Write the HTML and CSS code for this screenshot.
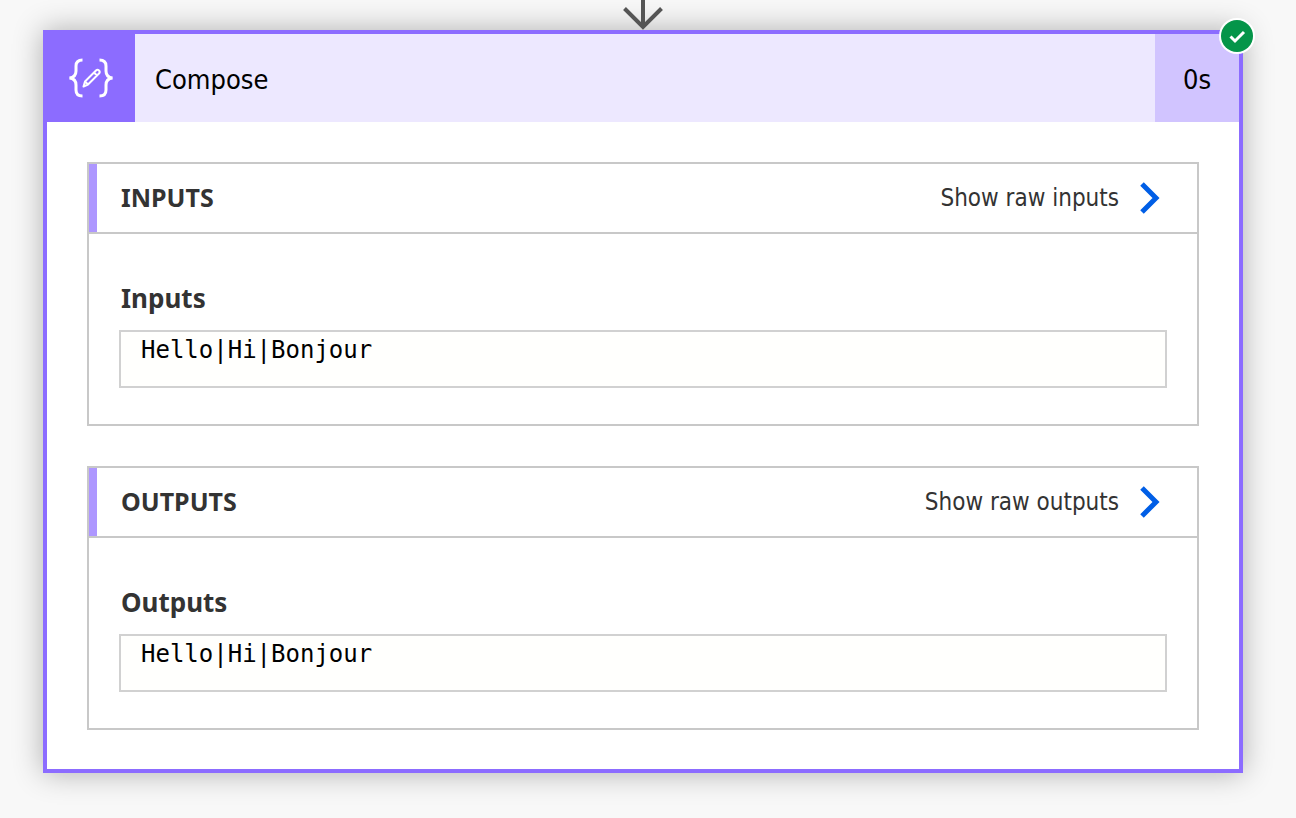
FILE: index.html
```
<!doctype html>
<html lang="en">
<head>
  <meta charset="UTF-8" />
  <meta name="viewport" content="width=device-width, initial-scale=1" />
  <title>Compose</title>
  <link rel="stylesheet" href="styles.css">
</head>
<body>
<main class="flow">

  <svg class="flow-arrow" viewBox="0 0 40 30" aria-hidden="true">
    <path d="M20 0V27M1.5 8.5L20 27L38.5 8.5" />
  </svg>

  <article class="card">
    <header class="card-header">
      <div class="card-icon">
        <svg viewBox="0 0 48 44" aria-hidden="true">
          <path class="brace" d="M15.5 4C11 4 9 6 9 10V15C9 19 7 21.5 2.5 22C7 22.5 9 25 9 29V34C9 38 11 40 15.5 40" />
          <path class="brace" d="M32.5 4C37 4 39 6 39 10V15C39 19 41 21.5 45.5 22C41 22.5 39 25 39 29V34C39 38 37 40 32.5 40" />
          <path class="pencil" d="M16.5 30.500L18 25.500L29 14.500Q30.500 13 32 14.500T32 17.500L21 28.500ZM18 25.500L21 28.500M27 16.500L30 19.500" />
        </svg>
      </div>
      <h1 class="card-title">Compose</h1>
      <div class="card-time">0s</div>
      <svg class="status" viewBox="0 0 36 36" role="img" aria-label="Succeeded">
        <circle cx="18" cy="18" r="18" />
        <circle class="status-fill" cx="18" cy="18" r="16" />
        <path d="M11.5 18.5L16 23L25 14" />
      </svg>
    </header>

    <div class="card-body">
      <section class="panel">
        <div class="panel-header">
          <h2>INPUTS</h2>
          <button type="button" class="raw-btn">
            Show raw inputs
            <svg viewBox="0 0 20 32" aria-hidden="true"><path d="M2 2L16 16L2 30" /></svg>
          </button>
        </div>
        <div class="panel-content">
          <h3>Inputs</h3>
          <pre>Hello|Hi|Bonjour</pre>
        </div>
      </section>

      <section class="panel">
        <div class="panel-header">
          <h2>OUTPUTS</h2>
          <button type="button" class="raw-btn">
            Show raw outputs
            <svg viewBox="0 0 20 32" aria-hidden="true"><path d="M2 2L16 16L2 30" /></svg>
          </button>
        </div>
        <div class="panel-content">
          <h3>Outputs</h3>
          <pre>Hello|Hi|Bonjour</pre>
        </div>
      </section>
    </div>
  </article>

</main>
</body>
</html>
```
FILE: styles.css
```
* {
  box-sizing: border-box;
}

body {
  margin: 0;
  background-color: #f8f8f8;
  color: #333;
  font-family: Tahoma, "DejaVu Sans Condensed", "DejaVu Sans", sans-serif;
}

h1,
h2,
h3,
pre {
  margin: 0;
}

.flow {
  display: flex;
  flex-direction: column;
  padding: 0 53px 40px 43px;
}

.flow-arrow {
  position: relative;
  z-index: 1;
  align-self: center;
  width: 40px;
  height: 30px;
  fill: none;
  stroke: #555;
  stroke-width: 4;
}

.card {
  border: 4px solid #8c6cff;
  background-color: #fff;
  box-shadow: 0 0 28px rgba(0, 0, 0, 0.3);
}

.card-header {
  position: relative;
  display: flex;
  height: 88px;
  background-color: #ede8ff;
  color: #000;
  font-size: 27px;
  line-height: 92px;
}

.card-icon {
  display: flex;
  align-items: center;
  justify-content: center;
  width: 88px;
  background-color: #8c6cff;
}

.card-icon svg {
  width: 48px;
  height: 44px;
  fill: none;
  stroke: #fff;
}

.brace {
  stroke-width: 3;
}

.pencil {
  stroke-width: 2;
  stroke-linejoin: round;
}

.card-title {
  flex: 1;
  padding-left: 20px;
  font-size: 27px;
  font-weight: normal;
}

.card-time {
  width: 84px;
  background-color: #d1c4ff;
  text-align: center;
}

/* run status, sits over the card corner */
.status {
  position: absolute;
  top: -16px;
  right: -16px;
  width: 36px;
  height: 36px;
  fill: #fff;
}

.status .status-fill {
  fill: #059549;
}

.status path {
  fill: none;
  stroke: #fff;
  stroke-width: 3;
}

.card-body {
  display: flex;
  flex-direction: column;
  gap: 40px;
  padding: 40px 40px 39px;
}

.panel {
  border: 2px solid #c8c8c8;
}

.panel-header {
  display: flex;
  align-items: center;
  justify-content: space-between;
  height: 70px;
  padding: 0 37px 0 32px;
  border-bottom: 2px solid #c8c8c8;
  background: linear-gradient(#ae97ff, #ae97ff) left / 8px 100% no-repeat;
}

.panel-header h2 {
  padding-bottom: 2px;
  font-family: "Noto Sans", sans-serif;
  font-size: 25px;
  line-height: 32px;
}

.raw-btn {
  display: flex;
  align-items: center;
  gap: 21px;
  padding: 0;
  border: none;
  background: none;
  color: #333;
  font-family: inherit;
  font-size: 24px;
  line-height: 32px;
  cursor: pointer;
}

.raw-btn svg {
  width: 20px;
  height: 32px;
  fill: none;
  stroke: #005ee6;
  stroke-width: 5;
}

.panel-content {
  padding: 48px 30px 36px;
}

.panel-content h3 {
  padding-left: 2px;
  font-family: "Noto Sans", sans-serif;
  font-size: 26px;
  line-height: 32px;
}

.panel-content pre {
  min-height: 58px;
  margin-top: 16px;
  padding: 4px 20px;
  border: 2px solid #d1d1d1;
  background-color: #fffffd;
  color: #000;
  font-family: "DejaVu Sans Mono", monospace;
  font-size: 24px;
  line-height: 28px;
  overflow-x: auto;
}
```
